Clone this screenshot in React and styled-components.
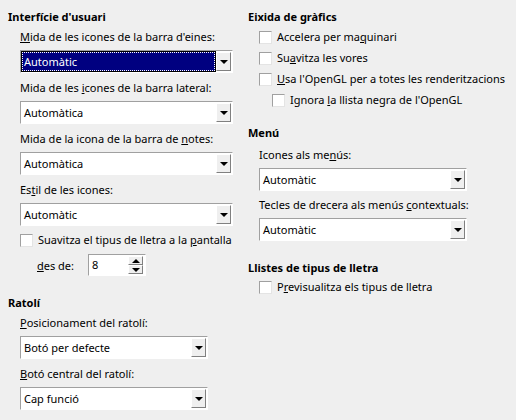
import React from 'react';
import styled, { createGlobalStyle } from 'styled-components';

const GlobalStyle = createGlobalStyle`
  html, body {
    margin: 0;
    padding: 0;
    background: #efefef;
  }
  body {
    font-family: 'Noto Sans', 'Open Sans', sans-serif;
    font-size: 11px;
    color: #000;
  }
`;

const Page = styled.div`
  display: grid;
  grid-template-columns: 240px 268px;
  padding: 9px 0 0 8px;
  height: 411px;
  box-sizing: border-box;
`;

const Column = styled.div`
  display: flex;
  flex-direction: column;
`;

const SectionTitle = styled.div`
  font-weight: bold;
  line-height: 16px;
  height: 16px;
  margin-top: ${(props) => props.top || 0}px;
`;

const Indent = styled.div`
  display: flex;
  flex-direction: column;
  padding-left: ${(props) => props.left || 12}px;
`;

const FieldLabel = styled.div`
  line-height: 16px;
  height: 16px;
  margin-top: ${(props) => props.top || 0}px;
  margin-bottom: 5px;
  white-space: nowrap;
`;

const ComboBox = styled.div`
  display: flex;
  width: ${(props) => props.width}px;
  height: 23px;
  box-sizing: border-box;
  background: #fff;
  border: 1px solid;
  border-color: #a0a0a0 #fff #fff #a0a0a0;
  padding: 1px;
`;

const ComboText = styled.div`
  flex: 1;
  display: flex;
  align-items: center;
  padding-left: 2px;
  margin-right: 1px;
  line-height: 16px;
  white-space: nowrap;
  ${(props) =>
    props.selected &&
    `
    background: #000080;
    color: #fff;
    outline: 1px solid #000;
    border: 1px dotted #fff;
    padding-left: 1px;
  `}
`;

const DropButton = styled.div`
  width: 15px;
  box-sizing: border-box;
  background: #efefef;
  border: 1px solid;
  border-color: #fff #808080 #808080 #fff;
  display: flex;
  align-items: center;
  justify-content: center;
`;

const Arrow = styled.span`
  width: 0;
  height: 0;
  border-left: 4px solid transparent;
  border-right: 4px solid transparent;
  border-${(props) => (props.up ? 'bottom' : 'top')}: 4px solid #000;
`;

const CheckRow = styled.div`
  display: flex;
  align-items: center;
  height: 16px;
  line-height: 16px;
  gap: 5px;
  margin-top: ${(props) => props.top || 0}px;
  padding-left: ${(props) => props.indent || 0}px;
  white-space: nowrap;
`;

const CheckBox = styled.span`
  width: 13px;
  height: 13px;
  box-sizing: border-box;
  background: #fff;
  border: 1px solid;
  border-color: #a0a0a0 #e4e4e4 #e4e4e4 #a0a0a0;
  flex-shrink: 0;
`;

const SpinRow = styled.div`
  display: flex;
  align-items: center;
  margin-top: 6px;
  padding-left: 17px;
  height: 22px;
`;

const SpinLabel = styled.span`
  width: 51px;
`;

const SpinBox = styled.div`
  display: flex;
  width: 58px;
  height: 22px;
  box-sizing: border-box;
  background: #fff;
  border: 1px solid;
  border-color: #a0a0a0 #fff #fff #a0a0a0;
  padding: 1px;
`;

const SpinValue = styled.div`
  flex: 1;
  padding-left: 2px;
  line-height: 18px;
`;

const SpinButtons = styled.div`
  display: flex;
  flex-direction: column;
  width: 15px;
  margin-right: 1px;
`;

const SpinButton = styled.div`
  flex: 1;
  background: #efefef;
  border: 1px solid;
  border-color: #fff #808080 #808080 #fff;
  display: flex;
  align-items: center;
  justify-content: center;
`;

const Combo = ({ width, value, selected }) => (
  <ComboBox width={width}>
    <ComboText selected={selected}>{value}</ComboText>
    <DropButton>
      <Arrow />
    </DropButton>
  </ComboBox>
);

const Field = ({ label, value, width, top, selected }) => (
  <>
    <FieldLabel top={top}>{label}</FieldLabel>
    <Combo width={width} value={value} selected={selected} />
  </>
);

const Check = ({ children, top, indent }) => (
  <CheckRow top={top} indent={indent}>
    <CheckBox />
    <span>{children}</span>
  </CheckRow>
);

const App = () => (
  <>
    <GlobalStyle />
    <Page>
      <Column>
        <SectionTitle>Interfície d'usuari</SectionTitle>
        <Indent>
          <Field
            top={4}
            width={213}
            selected
            value="Automàtic"
            label={<><u>M</u>ida de les icones de la barra d'eines:</>}
          />
          <Field
            top={7}
            width={213}
            value="Automàtica"
            label={<>Mida de les <u>i</u>cones de la barra lateral:</>}
          />
          <Field
            top={7}
            width={213}
            value="Automàtica"
            label={<>Mida de la icona de la barra de <u>n</u>otes:</>}
          />
          <Field
            top={7}
            width={213}
            value="Automàtic"
            label={<>Es<u>t</u>il de les icones:</>}
          />
          <Check top={6}>
            Suavitza el tipus de lletra a la <u>p</u>antalla
          </Check>
          <SpinRow>
            <SpinLabel>
              <u>d</u>es de:
            </SpinLabel>
            <SpinBox>
              <SpinValue>8</SpinValue>
              <SpinButtons>
                <SpinButton>
                  <Arrow up />
                </SpinButton>
                <SpinButton>
                  <Arrow />
                </SpinButton>
              </SpinButtons>
            </SpinBox>
          </SpinRow>
        </Indent>
        <SectionTitle top={19}>Ratolí</SectionTitle>
        <Indent>
          <Field
            top={4}
            width={188}
            value="Botó per defecte"
            label={<><u>P</u>osicionament del ratolí:</>}
          />
          <Field
            top={7}
            width={188}
            value="Cap funció"
            label={<><u>B</u>otó central del ratolí:</>}
          />
        </Indent>
      </Column>
      <Column>
        <SectionTitle>Eixida de gràfics</SectionTitle>
        <Indent left={11}>
          <Check top={4}>
            Accelera per ma<u>q</u>uinari
          </Check>
          <Check top={5}>
            Su<u>a</u>vitza les vores
          </Check>
          <Check top={5}>
            <u>U</u>sa l'OpenGL per a totes les renderitzacions
          </Check>
          <Check top={5} indent={13}>
            Ignora <u>l</u>a llista negra de l'OpenGL
          </Check>
        </Indent>
        <SectionTitle top={17}>Menú</SectionTitle>
        <Indent left={11}>
          <Field
            top={6}
            width={208}
            value="Automàtic"
            label={<>Icones als me<u>n</u>ús:</>}
          />
          <Field
            top={6}
            width={208}
            value="Automàtic"
            label={<>Tecles de drecera als menús <u>c</u>ontextuals:</>}
          />
        </Indent>
        <SectionTitle top={19}>Llistes de tipus de lletra</SectionTitle>
        <Indent left={11}>
          <Check top={3}>
            P<u>r</u>evisualitza els tipus de lletra
          </Check>
        </Indent>
      </Column>
    </Page>
  </>
);

export default App;
